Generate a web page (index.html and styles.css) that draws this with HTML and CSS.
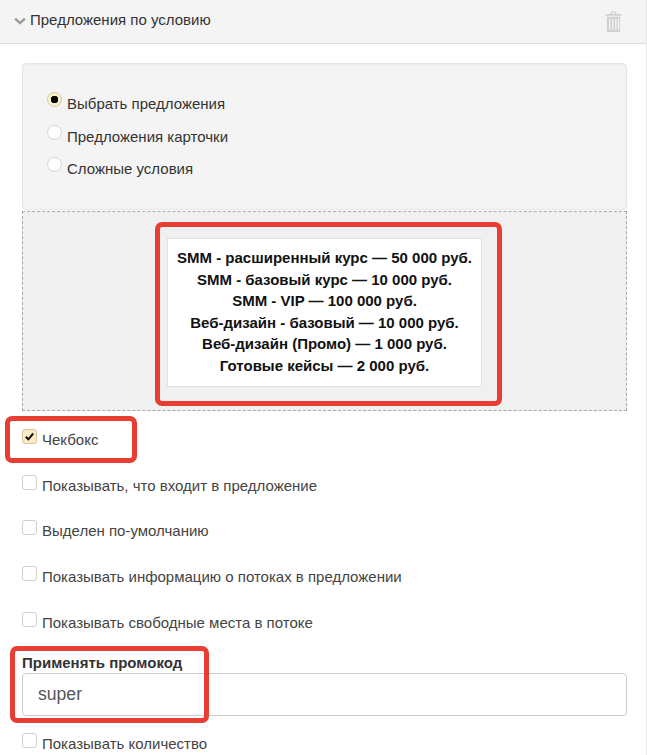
FILE: index.html
```html
<!DOCTYPE html>
<html lang="ru">
<head>
<meta charset="utf-8">
<title>Предложения по условию</title>
<link rel="stylesheet" href="styles.css">
</head>
<body>
<div class="panel">
  <header class="head">
    <div class="head-title">
      <svg class="chev" viewBox="0 0 12 8"><path d="M1.2 1.6 6 6.2l4.8-4.6" fill="none" stroke="#9a9a9a" stroke-width="2.4"/></svg>
      <span>Предложения по условию</span>
    </div>
    <svg class="trash" viewBox="0 0 18 22"><path fill="#cfcfcf" d="M6 2.2C6 1 6.8.4 8 .4h2c1.200 0 2 .6 2 1.800V3h5.500v2H.5V3H6zM7.500 3h3v-.8c0-.3-.1-.4-.5-.4H8c-.4 0-.5.100-.5.400zM2 6h14v14.500c0 .9-.6 1.500-1.500 1.500h-11C2.600 22 2 21.400 2 20.500zM4.300 8v12h1.400V8zm3.300 0v12H9V8zm3.200 0v12h1.400V8zm2.800 0v12H15V8z"/></svg>
  </header>
  <div class="content">
    <div class="well">
      <label class="radio"><span class="rd on"></span>Выбрать предложения</label>
      <label class="radio"><span class="rd"></span>Предложения карточки</label>
      <label class="radio"><span class="rd"></span>Сложные условия</label>
    </div>
    <div class="drop">
      <div class="list">
        <div>SMM - расширенный курс — 50 000 руб.</div>
        <div>SMM - базовый курс — 10 000 руб.</div>
        <div>SMM - VIP — 100 000 руб.</div>
        <div>Веб-дизайн - базовый — 10 000 руб.</div>
        <div>Веб-дизайн (Промо) — 1 000 руб.</div>
        <div>Готовые кейсы — 2 000 руб.</div>
      </div>
      <div class="mark mark-list"></div>
    </div>
    <div class="checks">
      <label class="check"><span class="cb on"><svg viewBox="0 0 14 14"><path d="M3 7.200 5.800 10 11 3.800" fill="none" stroke="#111" stroke-width="2.200"/></svg></span>Чекбокс<i class="mark mark-check"></i></label>
      <label class="check"><span class="cb"></span>Показывать, что входит в предложение</label>
      <label class="check"><span class="cb"></span>Выделен по-умолчанию</label>
      <label class="check"><span class="cb"></span>Показывать информацию о потоках в предложении</label>
      <label class="check"><span class="cb"></span>Показывать свободные места в потоке</label>
    </div>
    <div class="promo">
      <div class="promo-label">Применять промокод</div>
      <div class="promo-input">super</div>
      <div class="mark mark-promo"></div>
    </div>
    <label class="check last"><span class="cb"></span>Показывать количество</label>
  </div>
</div>
</body>
</html>
```
FILE: styles.css
```css
html, body { margin: 0; padding: 0; height: 755px; overflow: hidden; background: #fff; }
body { font-family: "Liberation Sans", Arial, sans-serif; font-size: 15px; color: #333; }
.panel { width: 646px; height: 755px; border-right: 1px solid #e6e6e6; overflow: hidden; }
.head { background: #f4f4f4; border-bottom: 1px solid #dedede; display: flex; align-items: center; justify-content: space-between; padding: 0 24px 4px 14px; height: 39px; }
.head-title { display: flex; align-items: center; gap: 4px; color: #333; }
.chev { width: 12px; height: 8px; margin-top: 2px; }
.trash { width: 17px; height: 21px; margin-top: 4px; }
.content { padding: 19px 19px 0 22px; }
.well { height: 147px; box-sizing: border-box; background: #f4f4f4; border: 1px solid #e5e5e5; border-radius: 4px; padding: 28px 24px 0; display: flex; flex-direction: column; gap: 16.500px; box-shadow: inset 0 1px 1px rgba(0,0,0,.04); }
.radio { display: flex; align-items: flex-start; height: 16px; line-height: 23px; color: #333; }
.rd { width: 15px; height: 15px; box-sizing: border-box; border: 1px solid #d4d4d4; border-radius: 50%; background: #fff; margin-right: 5px; flex: none; }
.rd.on { background: radial-gradient(circle, #000 0 3.500px, #fbefcf 4px); border-color: #d6c9a5; }
.drop { margin-top: 1px; height: 200px; box-sizing: border-box; background: #f0f0f0; border: 1px dashed #a8a8a8; position: relative; padding-top: 26px; }
.list { width: 315px; height: 149px; box-sizing: border-box; margin: 0 auto; background: #fff; border: 1px solid #e0e0e0; padding: 8px 0; text-align: center; font-weight: 700; color: #111; line-height: 21.600px; }
.checks { display: flex; flex-direction: column; margin-top: 18px; }
.check { position: relative; display: flex; align-items: flex-start; height: 45.700px; line-height: 22px; color: #444; }
.cb { width: 15px; height: 15px; box-sizing: border-box; border: 1px solid #cfcfcf; border-radius: 3px; background: #fff; margin-right: 5px; flex: none; }
.cb svg { display: block; width: 13px; height: 13px; }
.cb.on { background: #fbecc8; border-color: #d6c49a; }
.promo { position: relative; margin-top: -4.500px; }
.promo-label { font-weight: 700; color: #333; line-height: 20px; }
.promo-input { height: 43px; box-sizing: border-box; border: 1px solid #ccc; border-radius: 4px; padding: 0 15px; font-size: 17.600px; line-height: 41px; color: #555; }
.last { margin-top: 17px; }
.mark { position: absolute; box-sizing: border-box; border: 5px solid #e63e33; border-radius: 7px; display: block; pointer-events: none; }
.mark-list { left: 132px; top: 10px; width: 347px; height: 184px; }
.mark-check { left: -17px; top: -13px; width: 132px; height: 47px; }
.mark-promo { left: -12px; top: -7px; width: 199px; height: 77px; }
```
